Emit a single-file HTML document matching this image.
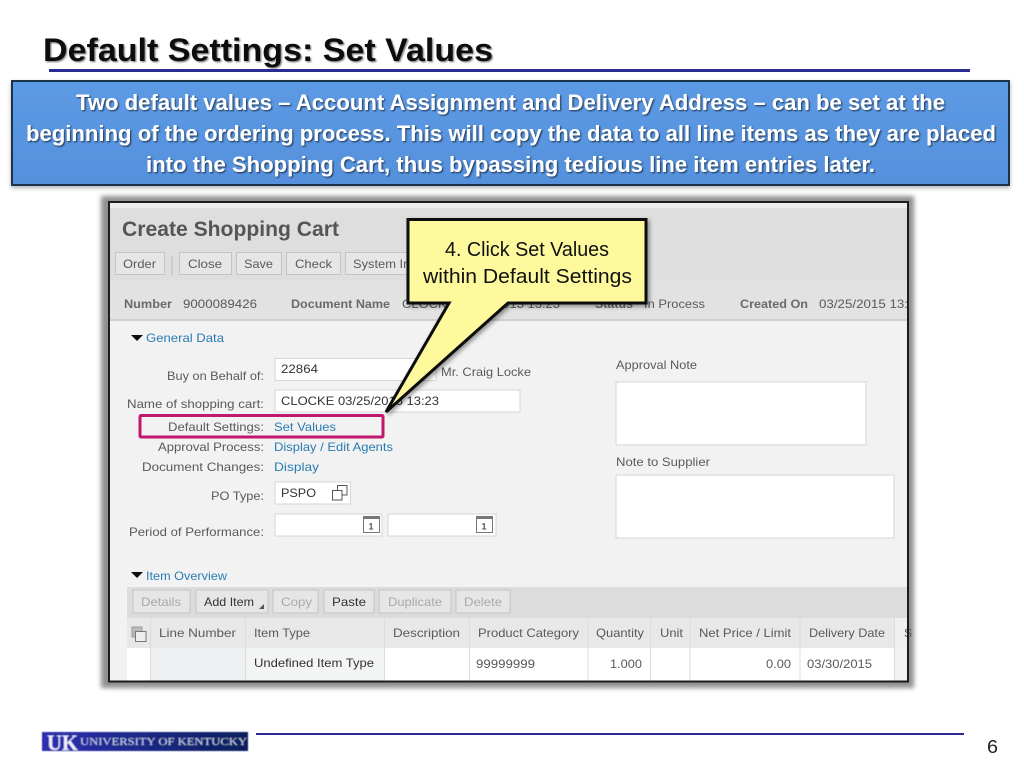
<!DOCTYPE html>
<html>
<head>
<meta charset="utf-8">
<style>
html,body{margin:0;padding:0;background:#fff;width:1024px;height:768px;overflow:hidden}
svg{display:block}
text{font-family:"Liberation Sans",sans-serif;white-space:pre}
.s{font-size:12px;fill:#5a5a5a}
.b{font-weight:bold;font-size:12px;fill:#6a6a6a}
.l{font-size:12px;fill:#2b7cb0}
.d{font-size:12px;fill:#333}
.g{font-size:12px;fill:#aaa}
.w{font-weight:bold;font-size:22px;fill:#fff}
.c{font-size:20px;fill:#111}
.btn{fill:#e6e6e6;stroke:#c4c4c4;stroke-width:1}
.inp{fill:#fff;stroke:#d6d6d6;stroke-width:1}
</style>
</head>
<body>
<svg width="1024" height="768" viewBox="0 0 1024 768" xmlns="http://www.w3.org/2000/svg">
<defs>
<linearGradient id="blue" x1="0" y1="0" x2="0" y2="1"><stop offset="0" stop-color="#5c9ae4"/><stop offset="1" stop-color="#5690dc"/></linearGradient>
<linearGradient id="uk" x1="0" y1="0" x2="1" y2="0"><stop offset="0" stop-color="#2f2fb0"/><stop offset=".45" stop-color="#1c2a8a"/><stop offset="1" stop-color="#0a1f5c"/></linearGradient>
<filter id="ts" x="-5%" y="-30%" width="110%" height="160%"><feDropShadow dx="1.2" dy="1.2" stdDeviation="0.9" flood-color="#000" flood-opacity=".6"/></filter>
<filter id="ts2" x="-5%" y="-30%" width="110%" height="160%"><feDropShadow dx="1.2" dy="1.2" stdDeviation="0.8" flood-color="#666" flood-opacity=".8"/></filter>
<filter id="box" x="-3%" y="-10%" width="106%" height="125%"><feDropShadow dx="0" dy="2" stdDeviation="2" flood-color="#000" flood-opacity=".3"/></filter>
<filter id="frame" x="-3%" y="-3%" width="106%" height="106%"><feGaussianBlur stdDeviation="2.500"/></filter>
<filter id="co" x="-10%" y="-10%" width="125%" height="125%"><feDropShadow dx="2" dy="2" stdDeviation="2" flood-color="#000" flood-opacity=".4"/></filter>
<filter id="soft"><feGaussianBlur stdDeviation="0.35"/></filter>
<filter id="soft2"><feGaussianBlur stdDeviation="0.5"/></filter>
</defs>

<text x="43" y="61" textLength="450" lengthAdjust="spacingAndGlyphs" font-size="32" font-weight="bold" fill="#0a0a0a" filter="url(#ts2)">Default Settings: Set Values</text>
<rect x="49" y="69" width="921" height="3" fill="#2a2a92"/>

<rect x="12" y="81" width="997" height="104" fill="url(#blue)" stroke="#1c3048" stroke-width="2" filter="url(#box)"/>
<text class="w" x="76" y="110" textLength="869" lengthAdjust="spacingAndGlyphs" filter="url(#ts)">Two default values – Account Assignment and Delivery Address – can be set at the</text>
<text class="w" x="26" y="141" textLength="970" lengthAdjust="spacingAndGlyphs" filter="url(#ts)">beginning of the ordering process. This will copy the data to all line items as they are placed</text>
<text class="w" x="146" y="172" textLength="729" lengthAdjust="spacingAndGlyphs" filter="url(#ts)">into the Shopping Cart, thus bypassing tedious line item entries later.</text>

<rect x="101" y="196" width="813" height="492" fill="#909090" filter="url(#frame)"/>
<rect x="109" y="202" width="799" height="479" fill="#f2f2f2"/>

<g filter="url(#soft)">
<rect x="110" y="203" width="797" height="10" fill="#ececec"/>
<rect x="110" y="208" width="797" height="112" fill="#dedede"/>
<rect x="110" y="280" width="797" height="40" fill="#e2e2e2"/>
<rect x="110" y="319" width="797" height="2" fill="#cfcfcf"/>

<text x="122" y="236" textLength="217" lengthAdjust="spacingAndGlyphs" font-size="21" font-weight="bold" fill="#555">Create Shopping Cart</text>

<rect class="btn" x="115.500" y="252.500" width="49" height="22"/>
<rect x="171" y="256" width="2" height="20" fill="#cdcdcd"/>
<rect class="btn" x="179.500" y="252.500" width="52" height="22"/>
<rect class="btn" x="236.500" y="252.500" width="45" height="22"/>
<rect class="btn" x="286.500" y="252.500" width="54" height="22"/>
<rect class="btn" x="345.500" y="252.500" width="70" height="22"/>
<text class="s" x="123" y="268" textLength="33" lengthAdjust="spacingAndGlyphs">Order</text>
<text class="s" x="188" y="268" textLength="34" lengthAdjust="spacingAndGlyphs">Close</text>
<text class="s" x="244" y="268" textLength="29" lengthAdjust="spacingAndGlyphs">Save</text>
<text class="s" x="295" y="268" textLength="37" lengthAdjust="spacingAndGlyphs">Check</text>
<text class="s" x="353" y="268" textLength="68" lengthAdjust="spacingAndGlyphs">System Info</text>

<text class="b" x="124" y="308" textLength="48" lengthAdjust="spacingAndGlyphs">Number</text>
<text class="s" x="183" y="308" textLength="74" lengthAdjust="spacingAndGlyphs">9000089426</text>
<text class="b" x="291" y="308" textLength="99" lengthAdjust="spacingAndGlyphs">Document Name</text>
<text class="s" x="402" y="308" textLength="158" lengthAdjust="spacingAndGlyphs">CLOCKE 03/25/2015 13:23</text>
<text class="b" x="595" y="308" textLength="38" lengthAdjust="spacingAndGlyphs">Status</text>
<text class="s" x="644" y="308" textLength="61" lengthAdjust="spacingAndGlyphs">In Process</text>
<text class="b" x="740" y="308" textLength="68" lengthAdjust="spacingAndGlyphs">Created On</text>
<text class="s" x="819" y="308" textLength="89" lengthAdjust="spacingAndGlyphs">03/25/2015 13:</text>

<path d="M131 335h12l-6 6z" fill="#111"/>
<text class="l" x="146" y="342" textLength="78" lengthAdjust="spacingAndGlyphs">General Data</text>

<text class="s" x="167" y="380" textLength="97" lengthAdjust="spacingAndGlyphs">Buy on Behalf of:</text>
<rect class="inp" x="275" y="358.500" width="161" height="22"/>
<text class="d" x="281" y="373" textLength="37" lengthAdjust="spacingAndGlyphs">22864</text>
<text class="s" x="441" y="376" textLength="90" lengthAdjust="spacingAndGlyphs">Mr. Craig Locke</text>

<text class="s" x="127" y="408" textLength="137" lengthAdjust="spacingAndGlyphs">Name of shopping cart:</text>
<rect class="inp" x="275" y="390" width="245" height="22"/>
<text class="d" x="281" y="405" textLength="158" lengthAdjust="spacingAndGlyphs">CLOCKE 03/25/2015 13:23</text>

<text class="s" x="168" y="431" textLength="96" lengthAdjust="spacingAndGlyphs">Default Settings:</text>
<text class="l" x="274" y="431" textLength="62" lengthAdjust="spacingAndGlyphs">Set Values</text>
<text class="s" x="158" y="451" textLength="106" lengthAdjust="spacingAndGlyphs">Approval Process:</text>
<text class="l" x="274" y="451" textLength="119" lengthAdjust="spacingAndGlyphs">Display / Edit Agents</text>
<text class="s" x="142" y="471" textLength="122" lengthAdjust="spacingAndGlyphs">Document Changes:</text>
<text class="l" x="274" y="471" textLength="45" lengthAdjust="spacingAndGlyphs">Display</text>

<text class="s" x="211" y="500" textLength="53" lengthAdjust="spacingAndGlyphs">PO Type:</text>
<rect class="inp" x="275" y="482" width="75.500" height="22"/>
<text class="d" x="281" y="497" textLength="35" lengthAdjust="spacingAndGlyphs">PSPO</text>
<path d="M337.500 490v-4.500h9.500v9.500h-5M332.500 490.500h9.500v9.500h-9.500z" fill="none" stroke="#555" stroke-width="1"/>

<text class="s" x="129" y="536" textLength="135" lengthAdjust="spacingAndGlyphs">Period of Performance:</text>
<rect class="inp" x="275" y="514" width="107" height="22"/>
<rect class="inp" x="388" y="514" width="108" height="22"/>
<rect x="363.500" y="516.500" width="16" height="16" fill="#fff" stroke="#777"/><rect x="363.500" y="516.500" width="16" height="2.500" fill="#777"/><text x="368.500" y="529.500" font-size="9" font-weight="bold" fill="#555">1</text>
<rect x="476.500" y="516.500" width="16" height="16" fill="#fff" stroke="#777"/><rect x="476.500" y="516.500" width="16" height="2.500" fill="#777"/><text x="481.500" y="529.500" font-size="9" font-weight="bold" fill="#555">1</text>

<text class="s" x="616" y="369" textLength="81" lengthAdjust="spacingAndGlyphs">Approval Note</text>
<rect class="inp" x="616" y="382" width="250" height="63"/>
<text class="s" x="616" y="466" textLength="94" lengthAdjust="spacingAndGlyphs">Note to Supplier</text>
<rect class="inp" x="616" y="475" width="278" height="63"/>

<path d="M131 572h12l-6 6z" fill="#111"/>
<text class="l" x="146" y="580" textLength="81" lengthAdjust="spacingAndGlyphs">Item Overview</text>

<rect x="127" y="587" width="780" height="31" fill="#dcdcdc"/>
<rect class="btn" x="133" y="590" width="57" height="23"/>
<rect class="btn" x="196" y="590" width="72" height="23"/>
<rect class="btn" x="273" y="590" width="45" height="23"/>
<rect class="btn" x="324" y="590" width="50" height="23"/>
<rect class="btn" x="379" y="590" width="72" height="23"/>
<rect class="btn" x="456" y="590" width="54" height="23"/>
<text class="g" x="141" y="606" textLength="40" lengthAdjust="spacingAndGlyphs">Details</text>
<text class="d" x="204" y="606" textLength="50" lengthAdjust="spacingAndGlyphs">Add Item</text>
<path d="M264 604v5h-5z" fill="#555"/>
<text class="g" x="281" y="606" textLength="31" lengthAdjust="spacingAndGlyphs">Copy</text>
<text class="d" x="332" y="606" textLength="34" lengthAdjust="spacingAndGlyphs">Paste</text>
<text class="g" x="388" y="606" textLength="54" lengthAdjust="spacingAndGlyphs">Duplicate</text>
<text class="g" x="464" y="606" textLength="38" lengthAdjust="spacingAndGlyphs">Delete</text>

<rect x="127" y="618" width="768" height="30" fill="#e8e8e8"/>
<rect x="895" y="618" width="12" height="30" fill="#f0f0f0"/>
<rect x="127" y="648" width="768" height="33" fill="#fff"/>
<rect x="150" y="648" width="95" height="33" fill="#eef0f2"/>
<rect x="245" y="648" width="139" height="33" fill="#f3f4f4"/>
<path d="M150.500 618V681M245.500 618V681M384.500 618V681M469.500 618V681M588 618V681M650.500 618V681M690 618V681M800 618V681M894.500 618V681" stroke="#dcdcdc" fill="none"/>
<rect x="132" y="627" width="10" height="10" fill="#bbb" stroke="#999"/>
<rect x="135.500" y="631.500" width="10.500" height="10" fill="#eee" stroke="#777"/>
<text class="s" x="159" y="637" textLength="77" lengthAdjust="spacingAndGlyphs">Line Number</text>
<text class="s" x="254" y="637" textLength="56" lengthAdjust="spacingAndGlyphs">Item Type</text>
<text class="s" x="393" y="637" textLength="67" lengthAdjust="spacingAndGlyphs">Description</text>
<text class="s" x="478" y="637" textLength="101" lengthAdjust="spacingAndGlyphs">Product Category</text>
<text class="s" x="596" y="637" textLength="48" lengthAdjust="spacingAndGlyphs">Quantity</text>
<text class="s" x="660" y="637" textLength="23" lengthAdjust="spacingAndGlyphs">Unit</text>
<text class="s" x="699" y="637" textLength="92" lengthAdjust="spacingAndGlyphs">Net Price / Limit</text>
<text class="s" x="809" y="637" textLength="76" lengthAdjust="spacingAndGlyphs">Delivery Date</text>
<text class="s" x="904" y="637">S</text>
<text class="d" x="254" y="667" textLength="120" lengthAdjust="spacingAndGlyphs">Undefined Item Type</text>
<text class="s" x="476" y="668" textLength="59" lengthAdjust="spacingAndGlyphs">99999999</text>
<text class="s" x="610" y="668" textLength="32" lengthAdjust="spacingAndGlyphs">1.000</text>
<text class="s" x="766" y="668" textLength="25" lengthAdjust="spacingAndGlyphs">0.00</text>
<text class="s" x="807" y="668" textLength="65" lengthAdjust="spacingAndGlyphs">03/30/2015</text>
</g>

<rect x="109" y="202" width="799" height="479.500" fill="none" stroke="#1c1c1c" stroke-width="2"/>

<rect x="140" y="415.500" width="243" height="21.500" rx="1" fill="none" stroke="#c1176f" stroke-width="3"/>

<path d="M408 219.500H646V303H508L386 412L449 303H408Z" fill="#fdf99c" stroke="#0a0a0a" stroke-width="3" stroke-linejoin="miter" filter="url(#co)"/>
<text class="c" x="445" y="256" textLength="164" lengthAdjust="spacingAndGlyphs">4. Click Set Values</text>
<text class="c" x="423" y="283" textLength="209" lengthAdjust="spacingAndGlyphs">within Default Settings</text>

<g filter="url(#soft2)">
<rect x="42" y="732" width="206" height="19" fill="url(#uk)"/>
<text x="47" y="750" textLength="31" lengthAdjust="spacingAndGlyphs" font-size="22" font-weight="bold" fill="#eef" style="font-family:'Liberation Serif',serif">UK</text>
<text x="80" y="745" textLength="167" lengthAdjust="spacingAndGlyphs" font-size="11" fill="#c8d2e8" style="font-family:'Liberation Serif',serif">UNIVERSITY OF KENTUCKY</text>
</g>
<rect x="256" y="733" width="708" height="2" fill="#2a2a92"/>
<text x="987" y="753" textLength="11" lengthAdjust="spacingAndGlyphs" font-size="18" fill="#222">6</text>
</svg>
</body>
</html>
